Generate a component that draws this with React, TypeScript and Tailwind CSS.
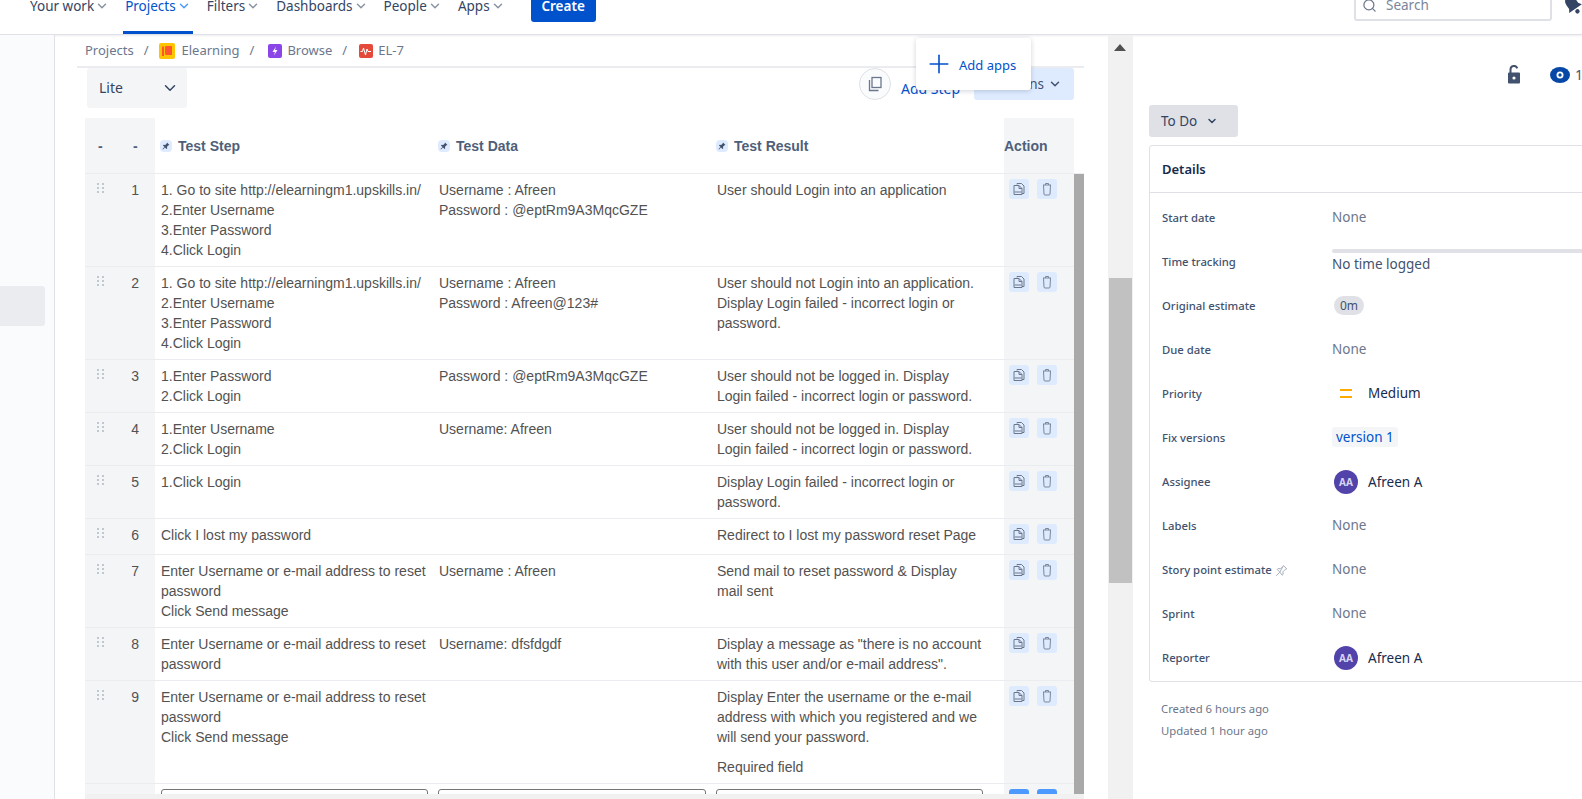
import React from 'react'
import { ChevronDown, Search, Plus } from 'lucide-react'

// ================================
// CONSTANTS
// ================================

const UI_FONT = "font-['Noto_Sans',sans-serif]"
const TABLE_FONT = "font-['Liberation_Sans',Arial,sans-serif]"

const NAV_ITEMS = [
  { label: 'Your work', active: false },
  { label: 'Projects', active: true },
  { label: 'Filters', active: false },
  { label: 'Dashboards', active: false },
  { label: 'People', active: false },
  { label: 'Apps', active: false },
]

const RETRY_LOGIN = ['1. Go to site http://elearningm1.upskills.in/', '2.Enter Username', '3.Enter Password', '4.Click Login']
const RESET_STEP = ['Enter Username or e-mail address to reset', 'password']

const ROWS = [
  {
    id: 1,
    step: RETRY_LOGIN,
    data: ['Username : Afreen', 'Password : @eptRm9A3MqcGZE'],
    result: ['User should Login into an application'],
  },
  {
    id: 2,
    step: RETRY_LOGIN,
    data: ['Username : Afreen', 'Password : Afreen@123#'],
    result: ['User should not Login into an application.', 'Display Login failed - incorrect login or', 'password.'],
  },
  {
    id: 3,
    step: ['1.Enter Password', '2.Click Login'],
    data: ['Password : @eptRm9A3MqcGZE'],
    result: ['User should not be logged in. Display', 'Login failed - incorrect login or password.'],
  },
  {
    id: 4,
    step: ['1.Enter Username', '2.Click Login'],
    data: ['Username: Afreen'],
    result: ['User should not be logged in. Display', 'Login failed - incorrect login or password.'],
  },
  {
    id: 5,
    step: ['1.Click Login'],
    data: [],
    result: ['Display Login failed - incorrect login or', 'password.'],
  },
  {
    id: 6,
    step: ['Click I lost my password'],
    data: [],
    result: ['Redirect to I lost my password reset Page'],
  },
  {
    id: 7,
    step: [...RESET_STEP, 'Click Send message'],
    data: ['Username : Afreen'],
    result: ['Send mail to reset password & Display', 'mail sent'],
  },
  {
    id: 8,
    step: RESET_STEP,
    data: ['Username: dfsfdgdf'],
    result: ['Display a message as "there is no account', 'with this user and/or e-mail address".'],
  },
  {
    id: 9,
    step: [...RESET_STEP, 'Click Send message'],
    data: [],
    result: ['Display Enter the username or the e-mail', 'address with which you registered and we', 'will send your password.'],
    note: 'Required field',
  },
]

// ================================
// ICONS
// ================================

const PinBadge = () => (
  <span className="flex h-3 w-3 items-center justify-center rounded-sm bg-[#deebff]">
    <svg className="h-2 w-2" viewBox="0 0 16 16" fill="#42526e">
      <path d="M10 1l5 5-2 .6-3 3 .4 3.4-1.4 1L6 11l-4 4-1-1 4-4-3-3 1-1.400 3.400.4 3-3z" />
    </svg>
  </span>
)

const CopyIcon = () => (
  <svg className="h-[14px] w-[14px]" viewBox="0 0 14 14" fill="none" stroke="#6b778c" strokeWidth="1">
    <path d="M5 2.500V1.500h4.500l2.500 2.500v7.500h-2" />
    <path d="M2 3.500h5l3 3v6H2z" />
    <path d="M7 3.500v3h3" />
    <path d="M2.500 10h7" />
  </svg>
)

const TrashIcon = () => (
  <svg className="h-[14px] w-[14px]" viewBox="0 0 14 14" fill="none" stroke="#7a869a" strokeWidth="1">
    <path d="M3 3h8M5.500 3V1.500h3V3" />
    <path d="M3.500 3l.5 9a1 1 0 001 1h4a1 1 0 001-1l.5-9" />
  </svg>
)

const DragHandle = () => (
  <svg className="h-2.5 w-2" viewBox="0 0 8 10" fill="#c1c7d0">
    {[0, 4, 8].map((y) => (
      <React.Fragment key={y}>
        <rect x="0" y={y} width="2" height="2" />
        <rect x="5" y={y} width="2" height="2" />
      </React.Fragment>
    ))}
  </svg>
)

const Avatar = () => (
  <span className="flex h-6 w-6 items-center justify-center rounded-full bg-[#5243aa] text-[10px] font-bold text-[#d8d4f0]">
    AA
  </span>
)

// ================================
// HEADER
// ================================

const TopBar = () => (
  <header className={`-mt-[22px] flex h-[57px] shrink-0 items-start border-b border-[#dfe1e6] bg-white pl-[28px] shadow-[0_1px_2px_rgba(9,30,66,0.08)] ${UI_FONT}`}>
    <nav className="flex h-[56px] items-center">
      {NAV_ITEMS.map((item) => (
        <div
          key={item.label}
          className={`mr-[12px] flex h-full items-center gap-px border-b-[3px] px-[2px] pt-[3px] text-[13.500px] ${
            item.active ? 'border-[#0052cc] text-[#0052cc]' : 'border-transparent text-[#344563]'
          }`}
        >
          {item.label}
          <ChevronDown size={14} strokeWidth={2.500} className={item.active ? 'text-[#4c9aff]' : 'text-[#8993a4]'} />
        </div>
      ))}
    </nav>
    <button className="ml-[12px] mt-[12px] flex h-8 w-[65px] items-center justify-center rounded-[3px] bg-[#0052cc] text-[13.500px] font-semibold text-white">
      Create
    </button>
    <div className="ml-auto mt-[11px] flex h-8 w-[198px] items-center gap-2 rounded-[3px] border-2 border-[#dfe1e6] px-[6px] text-[13.500px] text-[#7a869a]">
      <Search size={15} className="text-[#6b778c]" />
      <span className="ml-[1px]">Search</span>
    </div>
    <svg className="ml-[12px] mt-[16px] h-[22px] w-[18px] shrink-0 -rotate-[35deg]" viewBox="0 0 16 20" fill="#344563">
      <path d="M8 1c3.500 0 5 3 5 6v4l2 3H1l2-3V7c0-3 1.500-6 5-6z" />
      <circle cx="8" cy="17" r="2" />
    </svg>
  </header>
)

// ================================
// BREADCRUMBS
// ================================

const Breadcrumbs = () => (
  <div className={`flex h-[33px] shrink-0 items-center border-b-2 border-[#ebecf0] pl-2 pt-[1px] text-[13px] text-[#6b778c] ${UI_FONT}`}>
    <span>Projects</span>
    <span className="mx-[10px]">/</span>
    <svg className="mr-[7px] h-4 w-4" viewBox="0 0 16 16">
      <rect width="16" height="16" rx="2" fill="#ffc400" />
      <path d="M3 3.500h3.500v-.5h6.500v9H6.500V11H5v2H3z" fill="#ff5630" />
      <rect x="5" y="3" width="1" height="10" fill="#ffc400" />
    </svg>
    <span>Elearning</span>
    <span className="mx-[10px]">/</span>
    <svg className="mr-[5px] ml-[4px] h-[14px] w-[14px]" viewBox="0 0 14 14">
      <rect width="14" height="14" rx="2" fill="#8b46e8" />
      <path d="M8 2.500L4.500 8H7l-1 3.500L9.500 6H7z" fill="#fff" />
    </svg>
    <span>Browse</span>
    <span className="mx-[10px]">/</span>
    <svg className="mr-[5px] ml-[2px] h-[14px] w-[14px]" viewBox="0 0 14 14">
      <rect width="14" height="14" rx="2" fill="#e5493a" />
      <path d="M1.500 7.500h2l1-3.500 2 7 1.500-6 1 2.500h3" fill="none" stroke="#fff" strokeWidth="1" />
    </svg>
    <span>EL-7</span>
  </div>
)

// ================================
// TOOLBAR
// ================================

const Toolbar = () => (
  <div className={`relative flex h-[50px] shrink-0 items-start justify-between pl-[10px] pr-[10px] ${UI_FONT}`}>
    <div className="flex h-10 w-[100px] items-center justify-between rounded-[3px] bg-[#f4f5f7] pb-[1px] pl-3 pr-2 text-[14px] text-[#344563]">
      Lite
      <ChevronDown size={18} strokeWidth={2} className="text-[#344563]" />
    </div>
    <div className="flex h-8 items-center">
      <span className="flex h-8 w-8 items-center justify-center rounded-full border border-[#dfe1e6] bg-[#fafbfc]">
        <svg className="h-4 w-4" viewBox="0 0 16 16" fill="none" stroke="#6b778c" strokeWidth="1.300">
          <rect x="5" y="1.500" width="9" height="10" />
          <path d="M2.500 4v10.500h9" />
        </svg>
      </span>
      <span className="ml-[10px] mt-[8px] flex items-center text-[14px] text-[#0052cc]">
        Add Step
        <ChevronDown size={10} strokeWidth={3} />
      </span>
      <span className="ml-[4px] flex h-8 w-[100px] items-center justify-end gap-1 rounded-[3px] bg-[#deebff] pr-[12px] text-[13.500px] text-[#42526e]">
        <span className="mt-[1px]">Actions</span>
        <ChevronDown size={14} strokeWidth={2.500} />
      </span>
    </div>
    {/* floating quick-add card sits over the toolbar */}
    <div className="absolute left-[839px] top-[-30px] flex h-[52px] w-[115px] items-center gap-[5px] rounded-[3px] bg-white pl-[8px] text-[13px] text-[#0052cc] shadow-[0_1px_5px_rgba(9,30,66,0.2)]">
      <Plus size={30} strokeWidth={1.300} className="-mt-[1px]" />
      <span className="mt-[3px]">Add apps</span>
    </div>
  </div>
)

// ================================
// TABLE
// ================================

const HeaderCell = ({ label, width }: { label: string; width: string }) => (
  <div className={`flex items-center gap-[6px] pl-[5px] pt-[1px] ${width}`}>
    <PinBadge />
    {label}
  </div>
)

const Lines = ({ lines, width }: { lines: string[]; width: string }) => (
  <div className={`shrink-0 px-[6px] ${width}`}>
    {lines.map((line, index) => (
      <div key={index} className="whitespace-nowrap">
        {line}
      </div>
    ))}
  </div>
)

const TestTable = () => (
  <div className={`ml-2 flex min-h-0 flex-1 flex-col overflow-hidden text-[14px] leading-5 text-[#525252] ${TABLE_FONT}`}>
    <div className="flex h-[56px] shrink-0 items-stretch border-b border-[#ebecf0] pr-[10px] font-bold text-[#505f79]">
      <div className="flex w-[70px] shrink-0 items-center bg-[#f4f5f7] pl-[13px] pt-[1px]">
        <span className="w-[35px]">-</span>
        <span>-</span>
      </div>
      <HeaderCell label="Test Step" width="w-[278px]" />
      <HeaderCell label="Test Data" width="w-[278px]" />
      <HeaderCell label="Test Result" width="w-[293px]" />
      <div className="flex w-[70px] items-center bg-[#f4f5f7] pt-[1px]">Action</div>
    </div>
    <div className="flex min-h-0 flex-1">
      <div className="min-w-0 flex-1 overflow-hidden">
        {ROWS.map((row) => (
          <div key={row.id} className="flex min-h-[36px] border-b border-[#ebecf0]">
            <div className="flex w-[70px] shrink-0 bg-[#f4f5f7] pt-[6px]">
              <span className="flex h-5 w-[35px] items-start justify-center pr-[3px] pt-[3px]">
                <DragHandle />
              </span>
              <span className="w-[19px] text-right">{row.id}</span>
            </div>
            <div className="flex flex-1 py-[6px]">
              <Lines lines={row.step} width="w-[278px]" />
              <Lines lines={row.data} width="w-[278px]" />
              <div className="w-[293px] shrink-0 px-[6px]">
                {row.result.map((line, index) => (
                  <div key={index} className="whitespace-nowrap">
                    {line}
                  </div>
                ))}
                {row.note && <div className="mt-[10px]">{row.note}</div>}
              </div>
            </div>
            <div className="flex w-[70px] shrink-0 items-start gap-2 bg-[#f4f5f7] pl-[5px] pt-[5px]">
              <span className="flex h-5 w-5 items-center justify-center rounded-[3px] bg-[#deebff]">
                <CopyIcon />
              </span>
              <span className="flex h-5 w-5 items-center justify-center rounded-[3px] bg-[#deebff]">
                <TrashIcon />
              </span>
            </div>
          </div>
        ))}
        <div className="flex h-10">
          <div className="w-[70px] shrink-0 bg-[#f4f5f7]" />
          <div className="flex flex-1 pt-[5px]">
            <div className="ml-[6px] h-8 w-[267px] rounded-[3px] border border-[#767676]" />
            <div className="ml-[10px] h-8 w-[268px] rounded-[3px] border border-[#767676]" />
            <div className="ml-[10px] h-8 w-[267px] rounded-[3px] border border-[#767676]" />
          </div>
          <div className="flex w-[70px] shrink-0 items-start gap-2 bg-[#f4f5f7] pl-[5px] pt-[5px]">
            <span className="h-5 w-5 rounded-[3px] bg-[#4c9aff]" />
            <span className="h-5 w-5 rounded-[3px] bg-[#4c9aff]" />
          </div>
        </div>
      </div>
      <div className="w-[10px] shrink-0 bg-[#a9a9a9]" />
    </div>
    <div className="h-[5px] shrink-0 bg-[#f1f1f1]" />
  </div>
)

// ================================
// DETAILS PANEL
// ================================

const None = () => <span className="text-[#6b778c]">None</span>

const DETAILS: { label: React.ReactNode; value: React.ReactNode }[] = [
  { label: 'Start date', value: <None /> },
  {
    label: 'Time tracking',
    value: (
      <div className="mt-[1px]">
        <div className="h-1 w-full rounded-sm bg-[#dfe1e6]" />
        <div className="mt-[1px] text-[#42526e]">No time logged</div>
      </div>
    ),
  },
  {
    label: 'Original estimate',
    value: <span className="ml-[2px] rounded-full bg-[#dfe1e6] px-[6px] py-[1px] text-[12px] text-[#42526e]">0m</span>,
  },
  { label: 'Due date', value: <None /> },
  {
    label: 'Priority',
    value: (
      <span className="flex items-center text-[#172b4d]">
        <span className="ml-2 mr-4 flex w-3 flex-col gap-[5px]">
          <span className="h-[2px] bg-[#ffab00]" />
          <span className="h-[2px] bg-[#ffab00]" />
        </span>
        Medium
      </span>
    ),
  },
  {
    label: 'Fix versions',
    value: <span className="rounded-[3px] bg-[#f4f5f7] px-1 py-[1px] text-[#0052cc]">version 1</span>,
  },
  {
    label: 'Assignee',
    value: (
      <span className="mt-[2px] flex items-center gap-[10px] pl-[2px] text-[#172b4d]">
        <Avatar />
        Afreen A
      </span>
    ),
  },
  { label: 'Labels', value: <None /> },
  {
    label: (
      <span className="flex items-center gap-[3px]">
        Story point estimate
        <svg className="h-[13px] w-[13px]" viewBox="0 0 16 16" fill="none" stroke="#a5adba" strokeWidth="1.200">
          <path d="M10 1.500l4.500 4.500-1.800.6-3 3 .3 3.200-1.200 1L6 10l-4.500 4.500M6 10L2.700 6.800l1-1.200 3.200.3 3-3z" />
        </svg>
      </span>
    ),
    value: <None />,
  },
  { label: 'Sprint', value: <None /> },
  {
    label: 'Reporter',
    value: (
      <span className="mt-[2px] flex items-center gap-[10px] pl-[2px] text-[#172b4d]">
        <Avatar />
        Afreen A
      </span>
    ),
  },
]

const DetailsPanel = () => (
  <aside className={`min-w-0 flex-1 overflow-hidden pl-4 ${UI_FONT}`}>
    <div className="flex h-[70px] items-start pl-[358px] pt-[30px]">
      <svg className="h-[19px] w-[14px] shrink-0" viewBox="0 0 14 19" fill="#42526e">
        <path d="M1 8.500a1 1 0 011-1h10a1 1 0 011 1v9a1 1 0 01-1 1H2a1 1 0 01-1-1z" />
        <path d="M3.500 8V4.500a3.500 3.500 0 016.800-1.200" fill="none" stroke="#42526e" strokeWidth="2" />
        <circle cx="7" cy="13" r="1.600" fill="#fff" />
      </svg>
      <svg className="ml-[29px] mt-[2px] h-4 w-5 shrink-0" viewBox="0 0 20 16">
        <ellipse cx="10" cy="8" rx="10" ry="8" fill="#0747a6" />
        <circle cx="10" cy="8" r="3.500" fill="#fff" />
        <circle cx="10" cy="8" r="1.700" fill="#0747a6" />
      </svg>
      <span className="ml-[5px] text-[14px] leading-[19px] text-[#42526e]">1</span>
    </div>
    <div className="flex h-8 w-[89px] items-center gap-[9px] rounded-[3px] bg-[#dfe1e6] pl-3 text-[13.500px] text-[#344563]">
      To Do
      <ChevronDown size={12} strokeWidth={3} />
    </div>
    <div className="mt-2 w-[520px] rounded-[3px] border border-[#dfe1e6] pb-[1px]">
      <div className="flex h-[47px] items-center border-b border-[#dfe1e6] pl-3 pt-[1px] text-[13px] font-semibold text-[#172b4d]">
        Details
      </div>
      <div className="pt-[3px]">
        {DETAILS.map((row, index) => (
          <div key={index} className="flex h-[44px] items-center pl-3">
            <div className="w-[170px] shrink-0 text-[11.300px] font-medium text-[#42526e]">{row.label}</div>
            <div className="-mt-[2px] w-[337px] text-[13.500px]">{row.value}</div>
          </div>
        ))}
      </div>
    </div>
    <div className="mt-[16px] pl-3 text-[11.300px] leading-[22px] text-[#6b778c]">
      <div>Created 6 hours ago</div>
      <div>Updated 1 hour ago</div>
    </div>
  </aside>
)

// ================================
// MAIN RENDER
// ================================

export default function App() {
  return (
    <div className="flex h-[799px] w-[1582px] flex-col overflow-hidden bg-white">
      <TopBar />
      <div className="flex min-h-0 flex-1">
        <div className="w-[55px] shrink-0 border-r border-[#dfe1e6] bg-[#fafbfc] pt-[251px]">
          <div className="h-10 w-[45px] rounded-r-[3px] bg-[#ebecf0]" />
        </div>
        <main className="flex w-[1053px] min-w-0 shrink-0 flex-col pl-[22px] pr-[24px]">
          <Breadcrumbs />
          <Toolbar />
          <TestTable />
        </main>
        <div className="relative w-[25px] shrink-0 bg-[#f1f1f1] pt-[243px]">
          <svg className="absolute left-[6px] top-[9px] h-[7px] w-[12px]" viewBox="0 0 12 7" fill="#505050">
            <path d="M6 0l6 7H0z" />
          </svg>
          <div className="mx-[1px] h-[305px] bg-[#c1c1c1]" />
        </div>
        <DetailsPanel />
      </div>
    </div>
  )
}
